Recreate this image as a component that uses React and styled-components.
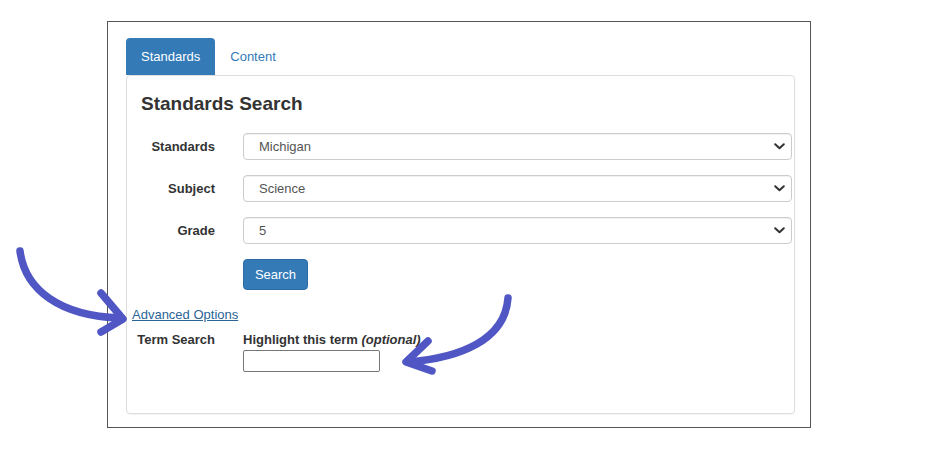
import React, { useState } from "react";
import styled, { createGlobalStyle } from "styled-components";

const GlobalStyle = createGlobalStyle`
  html, body {
    margin: 0;
    background: #fff;
    font-family: "Liberation Sans", Arial, Helvetica, sans-serif;
    color: #333;
  }
`;

const Page = styled.div`
  position: relative;
  width: 930px;
  height: 462px;
  padding: 21px 0 0 107px;
  box-sizing: border-box;
`;

const Frame = styled.div`
  width: 704px;
  height: 407px;
  box-sizing: border-box;
  border: 1px solid #555;
  padding: 16px 15px 0 18px;
`;

const Tabs = styled.div`
  display: flex;
  height: 37px;
`;

const Tab = styled.button`
  border: none;
  border-radius: 4px 4px 0 0;
  padding: 0 15px;
  font: 13px "Liberation Sans", Arial, sans-serif;
  background: ${(p) => (p.$active ? "#337ab7" : "transparent")};
  color: ${(p) => (p.$active ? "#fff" : "#337ab7")};
  cursor: pointer;
`;

const Panel = styled.div`
  height: 339px;
  box-sizing: border-box;
  border: 1px solid #ddd;
  border-radius: 4px;
  box-shadow: 0 1px 1px rgba(0, 0, 0, 0.05);
  padding: 17px 1px 0 0;
`;

const Heading = styled.h2`
  margin: 0 0 18px 14px;
  font-size: 19px;
  line-height: 22px;
  font-weight: bold;
  color: #333;
`;

const Row = styled.div`
  display: grid;
  grid-template-columns: 88px 549px;
  column-gap: 28px;
  align-items: ${(p) => p.$align || "center"};
  margin-bottom: ${(p) => p.$gap ?? 15}px;
`;

const Label = styled.label`
  text-align: right;
  font-size: 13px;
  font-weight: bold;
  line-height: 18px;
  color: #333;
`;

const SelectWrap = styled.div`
  position: relative;
  height: 27px;
`;

const Select = styled.select`
  appearance: none;
  width: 100%;
  height: 27px;
  box-sizing: border-box;
  border: 1px solid #ccc;
  border-radius: 4px;
  box-shadow: inset 0 1px 1px rgba(0, 0, 0, 0.06);
  background: #fff;
  padding: 0 15px;
  font: 13px "Liberation Sans", Arial, sans-serif;
  color: #555;
`;

const Chevron = styled.svg`
  position: absolute;
  right: 7px;
  top: 10px;
  pointer-events: none;
`;

const SearchButton = styled.button`
  width: 65px;
  height: 31px;
  border: 1px solid #2e6da4;
  border-radius: 4px;
  background: #337ab7;
  color: #fff;
  font: 13px "Liberation Sans", Arial, sans-serif;
  cursor: pointer;
`;

const AdvancedLink = styled.a`
  display: block;
  width: fit-content;
  padding-top: 1px;
  margin: 0 0 7px 5px;
  font-size: 13px;
  line-height: 18px;
  color: #2a6496;
  text-decoration: underline;
`;

const TermField = styled.div`
  display: flex;
  flex-direction: column;
  align-items: flex-start;
`;

const Optional = styled.i`
  font-weight: bold;
`;

const TermInput = styled.input`
  width: 137px;
  height: 22px;
  box-sizing: border-box;
  border: 1px solid #767676;
  border-radius: 2px;
  margin-top: 1px;
`;

const Arrows = styled.svg`
  position: absolute;
  left: 0;
  top: 0;
  pointer-events: none;
`;

const ChevronIcon = () => (
  <Chevron width="11" height="7" viewBox="0 0 11 7">
    <path d="M1.2 1.2 L5.5 5.3 L9.8 1.2" fill="none" stroke="#333" strokeWidth="2" strokeLinecap="round" strokeLinejoin="round" />
  </Chevron>
);

const fields = [
  { label: "Standards", value: "Michigan" },
  { label: "Subject", value: "Science" },
  { label: "Grade", value: "5" },
];

const App = () => {
  const [tab, setTab] = useState("standards");
  return (
    <Page>
      <GlobalStyle />
      <Frame>
        <Tabs>
          <Tab $active={tab === "standards"} onClick={() => setTab("standards")}>Standards</Tab>
          <Tab $active={tab === "content"} onClick={() => setTab("content")}>Content</Tab>
        </Tabs>
        <Panel>
          <Heading>Standards Search</Heading>
          {fields.map((f) => (
            <Row key={f.label}>
              <Label>{f.label}</Label>
              <SelectWrap>
                <Select defaultValue={f.value}>
                  <option>{f.value}</option>
                </Select>
                <ChevronIcon />
              </SelectWrap>
            </Row>
          ))}
          <Row>
            <span />
            <div>
              <SearchButton>Search</SearchButton>
            </div>
          </Row>
          <AdvancedLink href="#">Advanced Options</AdvancedLink>
          <Row $align="start">
            <Label>Term Search</Label>
            <TermField>
              <Label>
                Highlight this term <Optional>(optional)</Optional>
              </Label>
              <TermInput type="text" />
            </TermField>
          </Row>
        </Panel>
      </Frame>
      <Arrows width="930" height="462" viewBox="0 0 930 462">
        <g fill="none" stroke="#5057c4" strokeLinecap="round" strokeLinejoin="round">
          <path d="M20 251 C25 290, 60 316, 120 318" strokeWidth="7.5" />
          <path d="M101 293 L123 319 L101 332" strokeWidth="7.5" />
          <path d="M508 298 C505 340, 460 358, 408 362" strokeWidth="7.5" />
          <path d="M428 341 L406 362 L432 371" strokeWidth="7.5" />
        </g>
      </Arrows>
    </Page>
  );
};

export default App;
